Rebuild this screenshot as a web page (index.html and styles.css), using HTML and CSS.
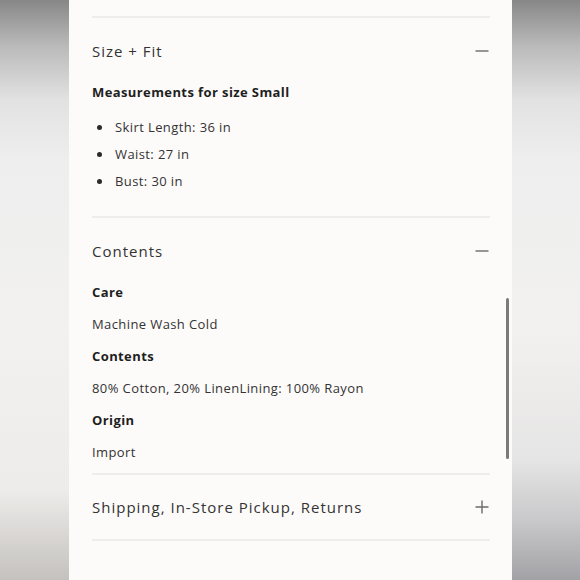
FILE: index.html
```html
<!DOCTYPE html>
<html lang="en">
<head>
<meta charset="utf-8">
<title>Product details</title>
<link rel="stylesheet" href="styles.css">
</head>
<body>
<div class="page">
  <div class="side side-left"></div>
  <main class="panel">
    <section class="acc">
      <div class="acc-head">
        <span class="acc-title">Size + Fit</span>
        <svg class="icon" width="14" height="14" viewBox="0 0 14 14"><path d="M0.5 7h13" stroke="#6b6b6b" stroke-width="1.4"/></svg>
      </div>
      <div class="acc-body acc-body-fit">
        <p class="label">Measurements for size Small</p>
        <ul class="bullets">
          <li>Skirt Length: 36 in</li>
          <li>Waist: 27 in</li>
          <li>Bust: 30 in</li>
        </ul>
      </div>
    </section>
    <section class="acc">
      <div class="acc-head">
        <span class="acc-title">Contents</span>
        <svg class="icon" width="14" height="14" viewBox="0 0 14 14"><path d="M0.5 7h13" stroke="#6b6b6b" stroke-width="1.4"/></svg>
      </div>
      <div class="acc-body acc-body-contents">
        <p class="label">Care</p>
        <p class="text">Machine Wash Cold</p>
        <p class="label">Contents</p>
        <p class="text">80% Cotton, 20% LinenLining: 100% Rayon</p>
        <p class="label">Origin</p>
        <p class="text">Import</p>
      </div>
    </section>
    <section class="acc acc-last">
      <div class="acc-head">
        <span class="acc-title">Shipping, In-Store Pickup, Returns</span>
        <svg class="icon" width="14" height="14" viewBox="0 0 14 14"><path d="M0.5 7h13M7 0.5v13" stroke="#6b6b6b" stroke-width="1.4"/></svg>
      </div>
    </section>
    <div class="scrollbar"></div>
  </main>
  <div class="side side-right"></div>
</div>
</body>
</html>
```

FILE: styles.css
```css
* { box-sizing: border-box; }
html, body { margin: 0; padding: 0; }
body {
  width: 580px;
  height: 580px;
  overflow: hidden;
  font-family: "Open Sans", "Liberation Sans", sans-serif;
  color: #2e2e2e;
}
.page {
  display: flex;
  width: 580px;
  height: 580px;
}
.side { flex: none; height: 580px; }
.side-left {
  width: 69px;
  background: linear-gradient(to bottom, #878787 0px, #b9b9b9 45px, #e2e2e2 100px, #eeeeee 160px, #f2f1f0 330px, #eeecea 490px, #c4c1be 580px);
}
.side-right {
  width: 68px;
  background: linear-gradient(to bottom, #878787 0px, #b9b9b9 45px, #e2e2e2 100px, #eeeeee 160px, #f2f1f0 330px, #e6e5e5 460px, #c9c8ca 520px, #a2a1a5 580px);
}
.panel {
  position: relative;
  width: 443px;
  height: 580px;
  background: #fdfbfa;
  padding: 16px 22px 0 23px;
}
.acc { border-top: 2px solid #efece9; }
.acc-last { border-bottom: 2px solid #efece9; }
.acc-head {
  display: flex;
  justify-content: space-between;
  align-items: center;
  height: 64px;
  padding: 2px 1px 0 0;
}
.acc-last .acc-head { padding-top: 0; }
.acc-title {
  font-size: 15px;
  line-height: 20px;
  letter-spacing: 1px;
  color: #333;
}
.icon { display: block; }
.acc-body p { margin: 0; font-size: 13px; line-height: 20px; letter-spacing: 0.4px; }
.label { font-weight: 700; color: #1f1f1f; }
.text { color: #333; }
.acc-body-fit { padding-bottom: 25px; }
.acc-body-contents { display: flex; flex-direction: column; gap: 12px; padding-bottom: 11px; }
.bullets {
  list-style: none;
  margin: 15px 0 0;
  padding: 0;
  display: flex;
  flex-direction: column;
  gap: 7px;
}
.bullets li {
  display: flex;
  align-items: center;
  font-size: 13px;
  line-height: 20px;
  letter-spacing: 0.4px;
  color: #333;
}
.bullets li::before {
  content: "";
  width: 5px;
  height: 5px;
  border-radius: 50%;
  background: #2a2a2a;
  margin: 0 13px 0 5px;
}
.scrollbar {
  position: absolute;
  left: 437px;
  top: 298px;
  width: 3px;
  height: 161px;
  border-radius: 2px;
  background: #7b7b7b;
}
```
